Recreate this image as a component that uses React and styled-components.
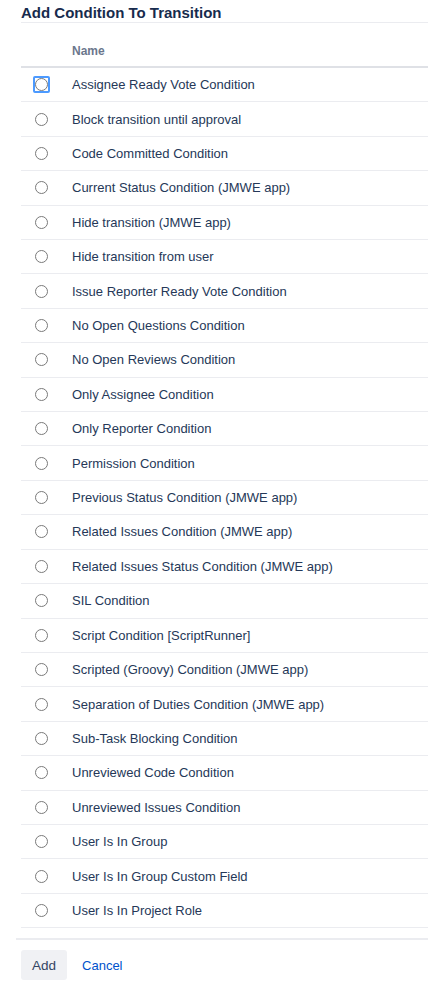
import styled, { createGlobalStyle } from 'styled-components';

const GlobalStyle = createGlobalStyle`
  html, body {
    margin: 0;
    padding: 0;
    background: #fff;
  }
  body {
    font-family: "Liberation Sans", Arial, sans-serif;
    color: #172b4d;
  }
`;

const conditions = [
  'Assignee Ready Vote Condition',
  'Block transition until approval',
  'Code Committed Condition',
  'Current Status Condition (JMWE app)',
  'Hide transition (JMWE app)',
  'Hide transition from user',
  'Issue Reporter Ready Vote Condition',
  'No Open Questions Condition',
  'No Open Reviews Condition',
  'Only Assignee Condition',
  'Only Reporter Condition',
  'Permission Condition',
  'Previous Status Condition (JMWE app)',
  'Related Issues Condition (JMWE app)',
  'Related Issues Status Condition (JMWE app)',
  'SIL Condition',
  'Script Condition [ScriptRunner]',
  'Scripted (Groovy) Condition (JMWE app)',
  'Separation of Duties Condition (JMWE app)',
  'Sub-Task Blocking Condition',
  'Unreviewed Code Condition',
  'Unreviewed Issues Condition',
  'User Is In Group',
  'User Is In Group Custom Field',
  'User Is In Project Role',
];

const Dialog = styled.div`
  padding-left: 16px;
  width: 100%;
  box-sizing: border-box;
`;

const Content = styled.div`
  padding-left: 5px;
`;

const Title = styled.h2`
  margin: 0;
  padding-top: 3px;
  font-size: 15px;
  line-height: 19px;
  font-weight: bold;
  color: #172b4d;
  border-bottom: 1px solid #ebecf0;
`;

const Table = styled.div`
  display: flex;
  flex-direction: column;
`;

const HeadRow = styled.div`
  display: grid;
  grid-template-columns: 51px 1fr;
  padding: 20px 0 7px;
  border-bottom: 2px solid #dfe1e6;
  font-size: 12px;
  line-height: 16px;
  font-weight: bold;
  color: #6b778c;
`;

const Row = styled.label`
  display: grid;
  grid-template-columns: 51px 1fr;
  align-items: center;
  height: 34.42px;
  box-sizing: border-box;
  border-bottom: 1px solid #ebecf0;
  font-size: 13px;
  color: #253858;
  cursor: pointer;
`;

const RadioCell = styled.span`
  display: flex;
  align-items: center;
  padding-left: 12px;
`;

const FocusBox = styled.span`
  display: flex;
  padding: 0;
  border: 2px solid ${(p) => (p.$focused ? '#4c9aff' : 'transparent')};
  border-radius: 2px;
`;

const Radio = styled.input.attrs({ type: 'radio' })`
  appearance: none;
  margin: 0;
  width: 13px;
  height: 13px;
  border: 1px solid #7a7a7a;
  border-radius: 50%;
  box-sizing: border-box;
  background: #fff;
  outline: none;
`;

const Footer = styled.div`
  margin-top: 10px;
  border-top: 2px solid #ebecf0;
  padding: 10px 0 0 5px;
  display: flex;
  align-items: center;
  gap: 15px;
`;

const Button = styled.button`
  height: 30px;
  padding: 0 11px;
  border: none;
  border-radius: 3px;
  background: #f0f1f4;
  color: #344563;
  font-family: "Liberation Sans", Arial, sans-serif;
  font-size: 13.5px;
  cursor: pointer;
`;

const LinkButton = styled.a`
  color: #0052cc;
  font-size: 13px;
  text-decoration: none;
  cursor: pointer;
`;

export default function App() {
  return (
    <>
      <GlobalStyle />
      <Dialog>
        <Content>
          <Title>Add Condition To Transition</Title>
          <Table>
            <HeadRow>
              <span />
              <span>Name</span>
            </HeadRow>
            {conditions.map((name, i) => (
              <Row key={name}>
                <RadioCell>
                  <FocusBox $focused={i === 0}>
                    <Radio name="condition" />
                  </FocusBox>
                </RadioCell>
                <span>{name}</span>
              </Row>
            ))}
          </Table>
        </Content>
        <Footer>
          <Button>Add</Button>
          <LinkButton>Cancel</LinkButton>
        </Footer>
      </Dialog>
    </>
  );
}
